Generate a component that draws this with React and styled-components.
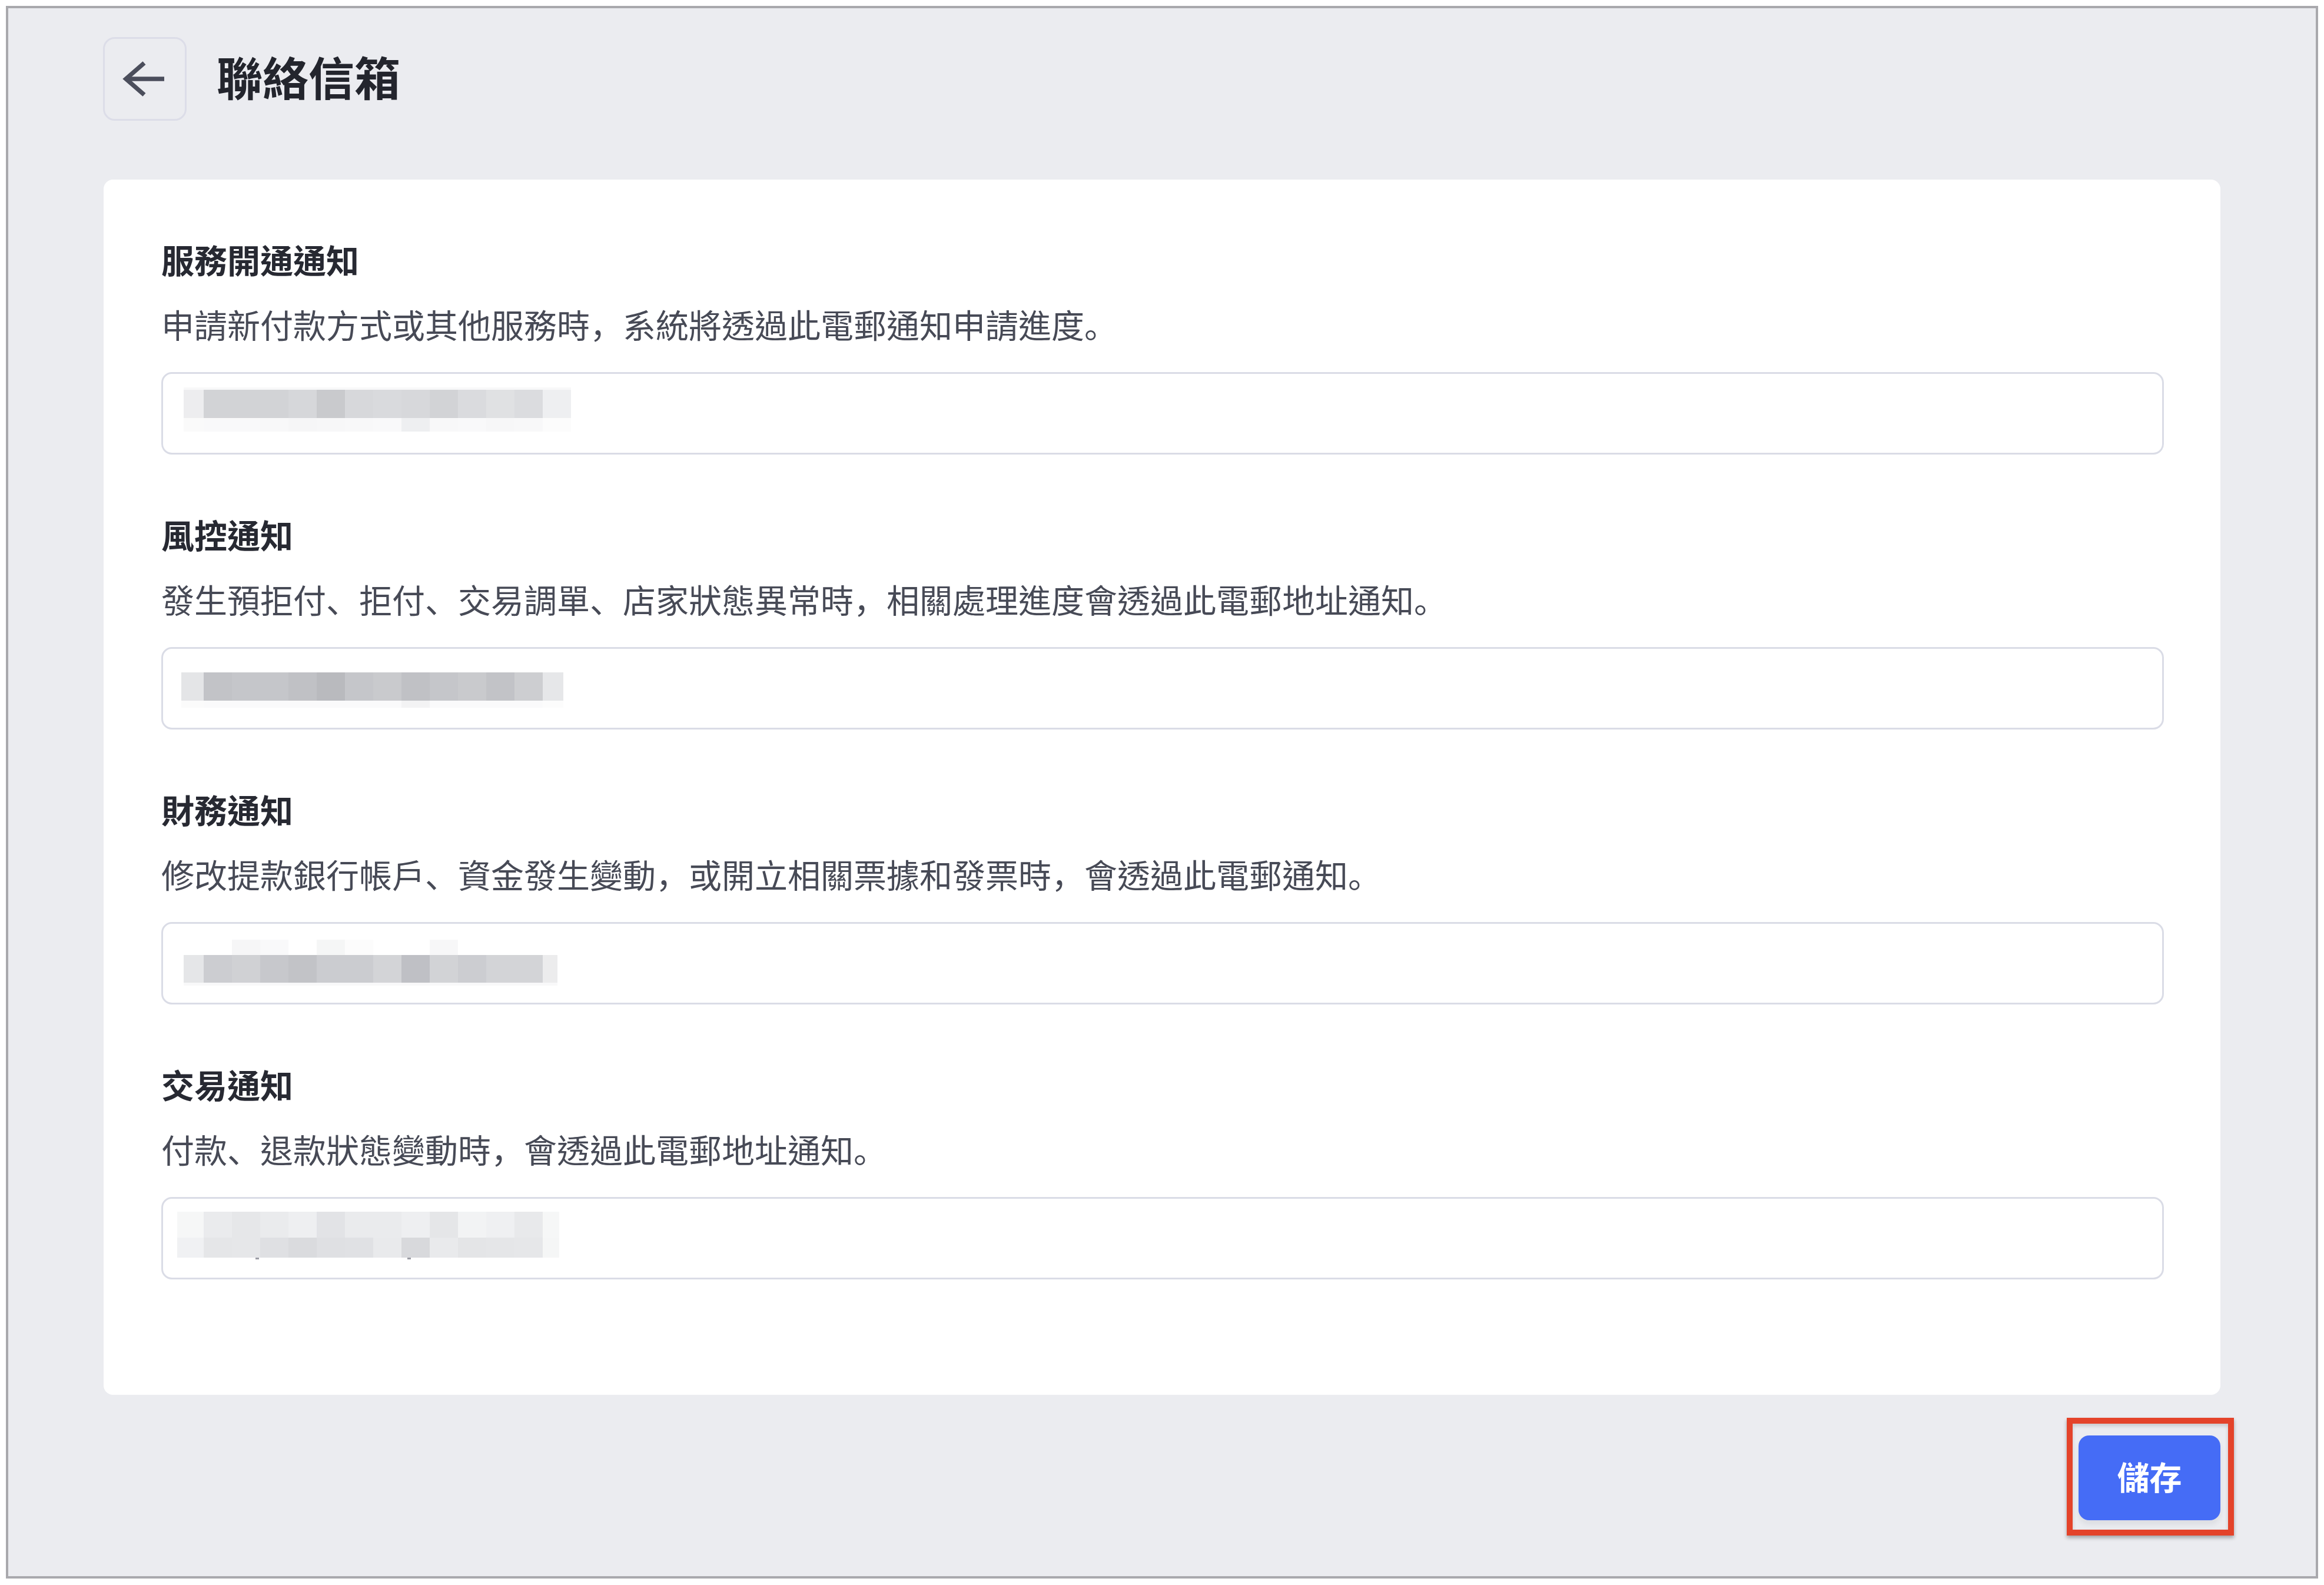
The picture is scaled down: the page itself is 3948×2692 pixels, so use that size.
import React from 'react'
import styled, {createGlobalStyle} from 'styled-components'

const GlobalStyle = createGlobalStyle`
    html, body {
        background: #ffffff;
    }
    body {
        margin: 10px;
        font-family: "Noto Sans CJK TC", "Noto Sans", sans-serif;
    }
    * {
        box-sizing: border-box;
    }
`;

// pixelated email placeholders: column edges are shared, only the ends differ
const innerEdges = [346, 394, 442, 490, 538, 586, 634, 682, 730, 778, 826, 874, 922];

const mosaics = [
    {
        start: 312, end: 970,
        rows: [
            {y: 26, h: 4, colors: Array(14).fill('#f8f8f9')},
            {y: 30, h: 48, colors: ['#ededef', '#d2d3d6', '#d2d3d6', '#d2d3d6', '#d6d7da', '#c9cacd', '#d7d8db', '#d9dadd', '#d7d8db', '#d2d3d6', '#dadbde', '#e0e1e3', '#dbdcdf', '#eeeff1']},
            {y: 78, h: 23, colors: ['#fafafa', '#f9f9fa', '#f9f9fa', '#f8f8f9', '#f6f6f7', '#f7f7f8', '#f8f8f9', '#f9f9fa', '#eeeff1', '#f8f8f9', '#f9f9fa', '#f7f7f8', '#f8f8f9', '#fcfcfc']},
        ],
    },
    {
        start: 308, end: 957,
        rows: [
            {y: 43, h: 48, colors: ['#e4e5e7', '#c2c3c7', '#c5c6ca', '#c5c6ca', '#c0c1c5', '#b9babe', '#c5c6ca', '#c9cacd', '#c0c1c5', '#c5c6ca', '#c9cacd', '#c2c3c7', '#cdced1', '#e6e7e9']},
            {y: 91, h: 12, colors: ['#fbfbfb', '#fafafb', '#fafafb', '#fafafb', '#fafafb', '#fafafb', '#fafafb', '#fafafb', '#f3f3f4', '#fafafb', '#fafafb', '#fafafb', '#fafafb', '#fcfcfc']},
        ],
    },
    {
        start: 312, end: 947,
        rows: [
            {y: 30, h: 26, colors: ['#ffffff', '#ffffff', '#f6f6f7', '#f9f9fa', '#ffffff', '#f5f6f6', '#fcfcfc', '#ffffff', '#ffffff', '#f7f7f8', '#ffffff', '#ffffff', '#ffffff', '#ffffff']},
            {y: 56, h: 47, colors: ['#e5e6e8', '#cccdd1', '#d0d1d4', '#c7c8cc', '#c2c3c7', '#cbccd0', '#cbccd0', '#d3d4d7', '#bfc0c5', '#d2d3d6', '#cccdd1', '#d3d4d7', '#d3d4d7', '#ececed']},
            {y: 103, h: 5, colors: Array(14).fill('#f8f8f9')},
        ],
    },
    {
        start: 301, end: 950,
        rows: [
            {y: 25, h: 44, colors: ['#f6f7f7', '#eaebed', '#e6e7e9', '#eaebed', '#eeeff1', '#e2e3e6', '#eaebed', '#eaebed', '#eeeff1', '#e5e6e8', '#f2f3f4', '#eff0f2', '#e8e9eb', '#f6f7f7']},
            {y: 69, h: 34, colors: ['#f0f1f3', '#e5e6e8', '#e6e7e9', '#dfe0e3', '#dadbde', '#dfe0e3', '#e0e1e4', '#e9eaec', '#d8d9dc', '#e9eaec', '#e4e5e7', '#e5e6e8', '#e6e7e9', '#f5f6f6']},
        ],
        dots: [[434, 103], [692, 103]],
    },
];

const sections = [
    {title: '服務開通通知', desc: '申請新付款方式或其他服務時，系統將透過此電郵通知申請進度。'},
    {title: '風控通知', desc: '發生預拒付、拒付、交易調單、店家狀態異常時，相關處理進度會透過此電郵地址通知。'},
    {title: '財務通知', desc: '修改提款銀行帳戶、資金發生變動，或開立相關票據和發票時，會透過此電郵通知。'},
    {title: '交易通知', desc: '付款、退款狀態變動時，會透過此電郵地址通知。'},
];

const Mosaic = ({data}) => {
    const edges = [data.start, ...innerEdges, data.end];
    return (
        <MosaicSvg width="680" height="134" viewBox="300 3 680 134">
            {data.rows.map((row, r) =>
                row.colors.map((c, i) => (
                    <rect
                        key={r + '-' + i}
                        x={edges[i]}
                        y={row.y}
                        width={edges[i + 1] - edges[i]}
                        height={row.h}
                        fill={c}
                    />
                ))
            )}
            {(data.dots || []).map(([x, y], i) => (
                <rect key={'d' + i} x={x} y={y} width="6" height="3" fill="#9c9da5"/>
            ))}
        </MosaicSvg>
    );
};

// full-width punctuation sits bottom-left in the original, as in the SC face
const withPunct = (text) =>
    text.split(/([，、。])/).map((part, i) =>
        /^[，、。]$/.test(part) ? <Punct key={i}>{part}</Punct> : part
    );

const ArrowLeft = () => (
    <svg width="80" height="80" viewBox="0 0 80 80" fill="none">
        <path d="M8 40H73" stroke="#4b4e5c" strokeWidth="7.5" strokeLinecap="butt"/>
        <path d="M39 13L8 40L39 67" stroke="#4b4e5c" strokeWidth="7.5" strokeLinecap="butt" strokeLinejoin="miter"/>
    </svg>
);

export default function App () {
    return (
        <>
            <GlobalStyle/>
            <Screen>
                <Header>
                    <BackButton aria-label="back">
                        <ArrowLeft/>
                    </BackButton>
                    <PageTitle>聯絡信箱</PageTitle>
                </Header>

                <Card>
                    {sections.map((s, i) => (
                        <Section key={i}>
                            <SectionTitle>{s.title}</SectionTitle>
                            <Description>{withPunct(s.desc)}</Description>
                            <Field>
                                <Mosaic data={mosaics[i]}/>
                            </Field>
                        </Section>
                    ))}
                </Card>

                <Footer>
                    <Highlight>
                        <SaveButton>儲存</SaveButton>
                    </Highlight>
                </Footer>
            </Screen>
        </>
    )
}

const Screen = styled.div`
    height: 2671px;
    border: 4px solid #a9a9ad;
    background: #ebecf0;
    box-shadow: 0 3px 6px rgba(0, 0, 0, 0.12);
    padding: 49px 162px 0 161px;
    display: flex;
    flex-direction: column;
`;

const Header = styled.div`
    display: flex;
    align-items: center;
    gap: 51px;
`;

const BackButton = styled.div`
    width: 142px;
    height: 142px;
    border: 3px solid #dcdde8;
    border-radius: 20px;
    display: flex;
    align-items: center;
    justify-content: center;
`;

const PageTitle = styled.h1`
    margin: 0;
    padding-bottom: 10px;
    font-size: 78px;
    line-height: 100px;
    font-weight: 700;
    color: #23252d;
`;

const Card = styled.div`
    margin-top: 100px;
    margin-left: 1px;
    background: #ffffff;
    border-radius: 16px;
    padding: 95px 96px 196px 98px;
    display: flex;
    flex-direction: column;
    gap: 95px;
`;

const Section = styled.div`
    display: flex;
    flex-direction: column;
`;

const SectionTitle = styled.div`
    font-size: 56px;
    line-height: 80px;
    font-weight: 700;
    color: #272932;
`;

const Description = styled.div`
    margin-top: 30px;
    font-size: 56px;
    line-height: 80px;
    font-weight: 400;
    color: #474a56;
`;

const Punct = styled.span`
    font-family: "Noto Sans CJK SC", "Noto Sans CJK TC", sans-serif;
`;

const Field = styled.div`
    margin-top: 42px;
    height: 140px;
    border: 3px solid #dadce6;
    border-radius: 18px;
    background: #ffffff;
    padding-left: 23px;
    display: flex;
    align-items: flex-start;
`;

const MosaicSvg = styled.svg`
    display: block;
    flex-shrink: 0;
`;

const Footer = styled.div`
    margin-top: 69px;
    display: flex;
    justify-content: flex-end;
`;

const Highlight = styled.div`
    position: relative;
    &::after {
        content: '';
        position: absolute;
        left: -20px;
        right: -23px;
        top: -30px;
        bottom: -26px;
        border: 10px solid #e4432a;
        box-shadow: 0 4px 6px rgba(0, 0, 0, 0.3), inset 0 4px 6px rgba(0, 0, 0, 0.15);
        pointer-events: none;
    }
`;

const SaveButton = styled.button`
    width: 241px;
    height: 144px;
    padding: 0 0 8px;
    border: none;
    border-radius: 18px;
    background: #456cf6;
    color: #ffffff;
    font-family: "Noto Sans CJK TC", "Noto Sans", sans-serif;
    font-size: 55px;
    font-weight: 700;
    box-shadow: 0 7px 8px rgba(40, 50, 80, 0.08);
    cursor: pointer;
`;
